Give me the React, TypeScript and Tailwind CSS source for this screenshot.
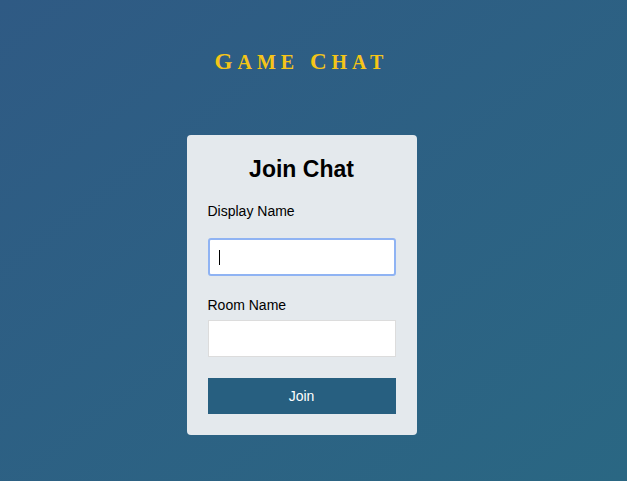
import React from "react"

export default function App() {
  return (
    <div className="w-full h-[481px] overflow-hidden bg-gradient-to-br from-[#2f5a84] to-[#2a6783] font-['Liberation_Sans',Arial,sans-serif]">
      <div className="flex flex-col items-center pr-[24px] pt-[49px]">
        {/* title, small caps drawn with two sizes */}
        <h1 className="h-[26px] leading-[26px] text-[#f5c518] font-['Liberation_Serif',serif] font-bold tracking-[5px] whitespace-nowrap">
          <span className="text-[23px]">G</span>
          <span className="text-[20px]">AME</span>
          <span className="text-[23px]"> C</span>
          <span className="text-[20px]">HAT</span>
        </h1>

        <div className="mt-[60px] w-[230px] bg-[#e4e9ed] rounded-[4px] px-[21px] pt-[21px] pb-[21px] flex flex-col">
          <h2 className="text-center text-[23px] leading-[26px] font-bold text-black">Join Chat</h2>

          <label className="mt-[21px] text-[14px] leading-[16px] text-black">Display Name</label>
          <div className="mt-[19px] h-[38px] bg-white border-2 border-[#8fb3f3] rounded-[3px] flex items-center pl-[9px]">
            <span className="block w-px h-[15px] bg-black" />
          </div>

          <label className="mt-[21px] text-[14px] leading-[16px] text-black">Room Name</label>
          <div className="mt-[7px] h-[37px] bg-white border border-[#dcdcdc]" />

          <button className="mt-[21px] h-[36px] bg-[#275f80] text-white text-[14px]">Join</button>
        </div>
      </div>
    </div>
  )
}
